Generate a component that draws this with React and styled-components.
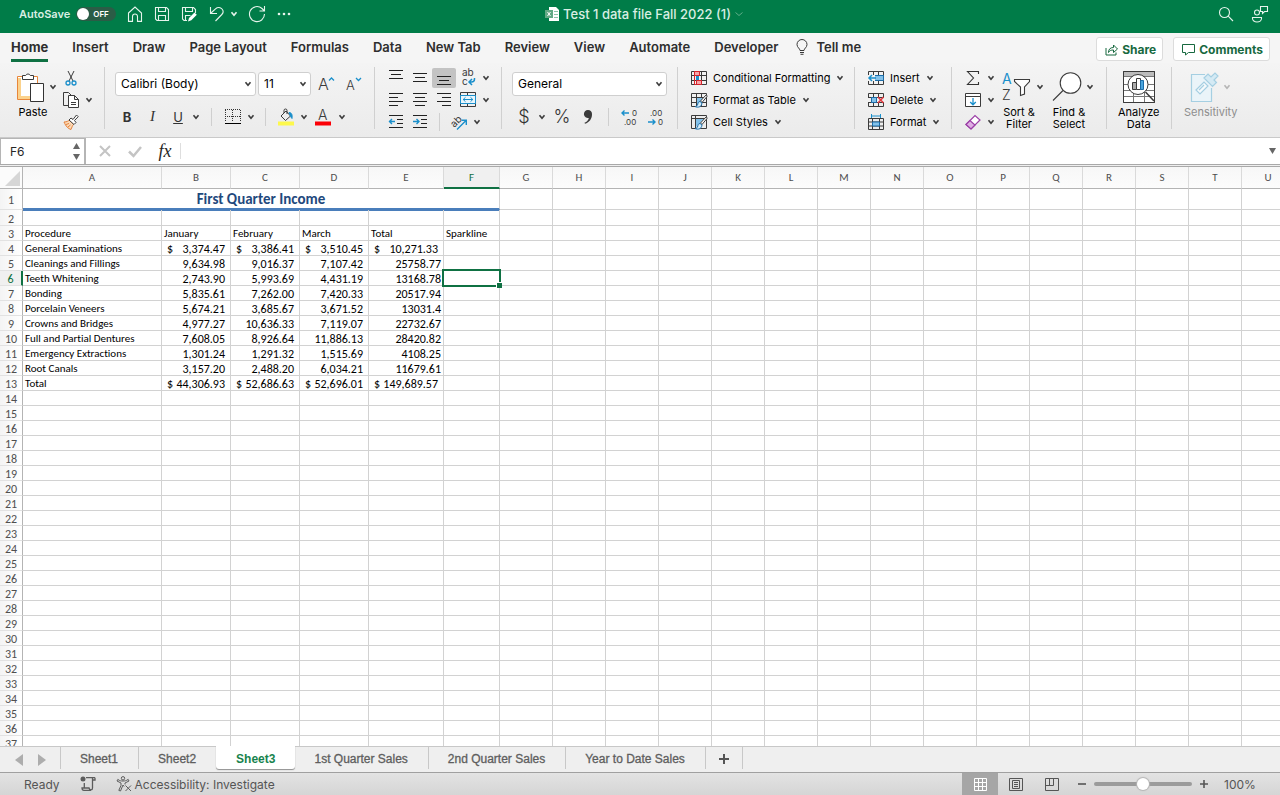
import { useState } from "react";
import styled, { createGlobalStyle, css } from "styled-components";

const GlobalStyle = createGlobalStyle`
  *, *::before, *::after {
    box-sizing: border-box;
  }

  body {
    margin: 0;
    font-family: Inter, "Liberation Sans", sans-serif;
    color: #262626;
    overflow: hidden;
  }

  button, input, select {
    font: inherit;
    color: inherit;
    margin: 0;
  }

  svg {
    display: block;
    flex: none;
    overflow: visible;
  }
`;

const Page = styled.div`
  height: 100vh;
  display: flex;
  flex-direction: column;
  background: #efefef;
`;

/* ---------- title bar ---------- */

const TitleBar = styled.header`
  height: 33px;
  flex: none;
  display: grid;
  grid-template-columns: 1fr auto 1fr;
  align-items: center;
  padding: 0 11px 5px 19px;
  background: #007c48;
  color: #d9eee3;
`;

const TitleSide = styled.div`
  display: flex;
  align-items: center;
  justify-content: ${({ $end }) => ($end ? "flex-end" : "flex-start")};
  gap: ${({ $end }) => ($end ? "17px" : "11px")};
`;

const AutoSave = styled.label`
  display: flex;
  align-items: center;
  gap: 6px;
  font-size: 11px;
  font-weight: 600;

  > input {
    position: absolute;
    opacity: 0;
  }

  > span {
    width: 40px;
    height: 14px;
    display: flex;
    align-items: center;
    gap: 4px;
    padding-left: 1px;
    border-radius: 7px;
    background: #2b5c46;
    color: #fff;
    font-size: 8px;
    font-weight: 600;
  }

  > span::before {
    content: "";
    width: 12px;
    height: 12px;
    border-radius: 50%;
    background: #fff;
  }
`;

const DocTitle = styled.h1`
  display: flex;
  align-items: center;
  gap: 4px;
  margin: 0;
  font-size: 13px;
  line-height: 16px;
  font-weight: 500;
`;

const BarButton = styled.button`
  display: flex;
  align-items: center;
  justify-content: center;
  min-width: ${({ $w }) => $w || 16}px;
  height: 20px;
  padding: 0;
  border: 0;
  background: none;
`;

const UndoGroup = styled.div`
  display: flex;
  align-items: center;
  gap: 6px;
`;

/* ---------- ribbon tabs ---------- */

const TabRow = styled.div`
  height: 30px;
  flex: none;
  display: flex;
  align-items: center;
  justify-content: space-between;
  padding: 0 10px 0 11px;
  background: #f5f5f5;
`;

const TabNav = styled.nav`
  display: flex;
  align-items: center;
  gap: 18px;
`;

const TabList = styled.div`
  display: flex;
  gap: 24px;
`;

const RibbonTab = styled.a`
  display: flex;
  align-items: center;
  gap: 8px;
  height: 28px;
  padding-top: 1px;
  border-bottom: 3px solid ${({ $active }) => ($active ? "#0f7143" : "transparent")};
  font-size: 13px;
  font-weight: ${({ $active }) => ($active ? 700 : 600)};
  color: #2e2e2e;
  text-decoration: none;
  white-space: nowrap;
`;

const TabActions = styled.div`
  display: flex;
  gap: 10px;
  padding-top: 2px;
`;

const ActionButton = styled.button`
  height: 24px;
  display: flex;
  align-items: center;
  gap: 4px;
  padding: 0 6px 0 8px;
  border: 1px solid #dcdcdc;
  border-radius: 3px;
  background: #fff;
  color: #17693f;
  font-size: 12px;
  font-weight: 700;
`;

/* ---------- ribbon ---------- */

const Ribbon = styled.div`
  height: 75px;
  flex: none;
  display: flex;
  padding-top: 4px;
  background: linear-gradient(#f4f4f4, #ebebeb);
  border-bottom: 1px solid #c9c9c9;
`;

const Group = styled.section`
  flex: none;
  width: ${({ $w }) => ($w ? $w + "px" : "auto")};
  height: 62px;
  display: flex;
  align-items: flex-start;
  gap: ${({ $gap }) => $gap || 0}px;
  padding-left: ${({ $pad }) => $pad}px;
  border-right: ${({ $last }) => ($last ? "0" : "1px solid #d0d0d0")};
`;

const Stack = styled.div`
  display: flex;
  flex-direction: column;
`;

const Pair = styled.div`
  display: flex;
  gap: 16px;
`;

const Line = styled.div`
  height: ${({ $tall }) => ($tall ? 33 : 22)}px;
  display: flex;
  align-items: center;
  gap: ${({ $gap }) => $gap || 0}px;
`;

const Tool = styled.button`
  width: ${({ $w }) => $w || 24}px;
  height: 20px;
  display: flex;
  align-items: center;
  justify-content: center;
  padding: 0;
  border: 0;
  border-radius: 2px;
  background: ${({ $pressed }) => ($pressed ? "#c3c3c3" : "none")};
  color: #333;
  font-size: ${({ $size }) => $size || 13}px;
  font-weight: ${({ $size }) => ($size ? 300 : 400)};
`;

const LabelTool = styled.button`
  height: 22px;
  display: flex;
  align-items: center;
  gap: 6px;
  padding: 0;
  border: 0;
  background: none;
  color: #000;
  font-size: 11px;
  font-weight: 400;
  white-space: nowrap;
`;

const BigTool = styled.button`
  display: flex;
  flex-direction: column;
  align-items: center;
  padding: 0;
  border: 0;
  background: none;
  color: ${({ disabled }) => (disabled ? "#8d8d8d" : "#000")};
  font-size: 11px;
  line-height: 12px;
  font-weight: 400;

  > span {
    height: 39px;
    display: flex;
    align-items: center;
    gap: 4px;
    margin-right: ${({ $menu }) => ($menu ? "-8px" : "0")};
  }
`;

const Rule = styled.i`
  width: 1px;
  height: 18px;
  margin: 0 ${({ $m }) => $m}px;
  background: #cfcfcf;
`;

const Picker = styled.label`
  width: ${({ $w }) => $w}px;
  height: 24px;
  display: flex;
  align-items: center;
  padding-right: 3px;
  border: 1px solid #cfcfcf;
  border-radius: 3px;
  background: #fff;

  > select {
    flex: 1;
    min-width: 0;
    padding: 0 0 0 5px;
    border: 0;
    outline: 0;
    background: none;
    appearance: none;
    font-size: 12px;
    color: #000;
  }
`;

/* ---------- formula bar ---------- */

const FormulaBar = styled.div`
  height: 27px;
  flex: none;
  display: flex;
  align-items: stretch;
  background: #fff;
  border-bottom: 1px solid #a9a9a9;
`;

const NameBox = styled.div`
  width: 86px;
  display: flex;
  align-items: center;
  justify-content: space-between;
  padding: 0 4px 0 9px;
  border: 1px solid #b5b5b5;
  border-width: 1px 2px 0 1px;

  > input {
    width: 50px;
    padding: 0;
    border: 0;
    outline: 0;
    font-size: 12px;
  }
`;

const FormulaTools = styled.div`
  display: flex;
  align-items: center;
  gap: 14px;
  padding: 0 7px 0 11px;
`;

const FormulaInput = styled.input`
  flex: 1;
  min-width: 0;
  margin: 5px 0;
  padding: 0 8px;
  border: 0;
  border-left: 1px solid #dedede;
  outline: 0;
  font-size: 12px;
`;

/* ---------- grid ---------- */

const GridArea = styled.main`
  flex: 1;
  min-height: 0;
  overflow: hidden;
  margin-top: 1px;
  border-top: 1px solid #a9a9a9;
  background: #fff;
`;

const Sheet = styled.table`
  width: max-content;
  table-layout: fixed;
  border-collapse: separate;
  border-spacing: 0;
  font-family: Carlito, Lato, "Noto Sans", sans-serif;
  font-size: 11px;
  line-height: 12px;
  font-variant-ligatures: none;
  color: #000;
`;

const Col = styled.col`
  width: ${({ $w }) => $w}px;
`;

const ColHead = styled.th`
  height: 22px;
  padding: 0;
  border-right: 1px solid #dadada;
  border-bottom: 1px solid #b4b4b4;
  background: linear-gradient(#f7f7f7, #fcfcfc);
  font-weight: 400;
  color: #4f4f4f;

  ${({ $selected }) => $selected && css`
    padding-top: 1px;
    background: #f0f0f0;
    border-bottom: 2px solid #0f7143;
    color: #0f7143;
  `}
`;

const Corner = styled.th`
  padding: 0 2px 2px 5px;
  border-right: 1px solid #b4b4b4;
  border-bottom: 1px solid #b4b4b4;
  background: #fbfbfb;
  vertical-align: bottom;
`;

const RowHead = styled.th`
  height: ${({ $h }) => $h}px;
  padding: 2px 0 0;
  border-right: 1px solid #b4b4b4;
  border-bottom: 1px solid #e2e2e2;
  background: linear-gradient(to right, #f4f4f4, #fff);
  font-size: 12px;
  font-weight: 400;
  color: #4f4f4f;

  ${({ $selected }) => $selected && css`
    background: #f0f0f0;
    border-right: 2px solid #0f7143;
    color: #0f7143;
  `}
`;

const Cell = styled.td`
  position: ${({ $selected }) => ($selected ? "relative" : "static")};
  padding: 2px ${({ $pad }) => $pad || 2}px 0;
  border-right: 1px solid #d2d2d2;
  border-bottom: 1px solid #d2d2d2;
  font-size: ${({ $number }) => ($number ? 12 : 11)}px;
  text-align: ${({ $number }) => ($number ? "right" : "left")};
  white-space: nowrap;
`;

const TitleCell = styled.td`
  padding: 1px 0 0;
  border-right: 1px solid #d2d2d2;
  border-bottom: 2px solid #4a7ebb;
  box-shadow: 0 1px 0 #4a7ebb;
  font-size: 15px;
  line-height: 18px;
  font-weight: 700;
  color: #1f497d;
  text-align: center;
`;

const Money = styled.span`
  display: flex;
  justify-content: space-between;
`;

const Cursor = styled.div`
  position: absolute;
  inset: -2px -2px -2px -2px;
  border: 2px solid #0f7143;

  &::after {
    content: "";
    position: absolute;
    right: -3px;
    bottom: -3px;
    width: 6px;
    height: 6px;
    border: solid #fff;
    border-width: 1px 0 0 1px;
    background: #0f7143;
  }
`;

/* ---------- sheet tabs and status bar ---------- */

const SheetBar = styled.nav`
  height: 27px;
  flex: none;
  display: flex;
  align-items: flex-start;
  padding-left: 11px;
  border-top: 1px solid #c8c8c8;
  border-bottom: 1px solid #a0a0a0;
  background: #efefef;
  font-family: "Liberation Sans", Arial, sans-serif;
`;

const Arrows = styled.div`
  display: flex;
  gap: 7px;
  padding: 3px 10px 0 0;
`;

const SheetTab = styled.button`
  height: 22px;
  padding: 2px ${({ $narrow }) => ($narrow ? 13 : 20)}px 0 ${({ $narrow }) => ($narrow ? 13 : 19)}px;
  border: 0;
  border-left: 1px solid #c8c8c8;
  background: none;
  color: #5e5e5e;
  font-size: 12px;
  font-weight: 400;
  -webkit-text-stroke: 0.3px currentColor;

  &:last-child {
    border-right: 1px solid #c8c8c8;
  }

  ${({ $active }) => $active && css`
    height: 23px;
    margin-top: -1px;
    padding: 3px 20px 0;
    border: 0;
    border-radius: 0 0 3px 3px;
    background: #fff;
    box-shadow: 0 1px 1px #8f8f8f;
    color: #17834d;
    font-weight: 700;
    -webkit-text-stroke: 0;

    & + button {
      border-left: 0;
    }
  `}
`;

const StatusBar = styled.footer`
  height: 22px;
  flex: none;
  display: flex;
  align-items: center;
  justify-content: space-between;
  padding: 0 24px;
  background: linear-gradient(#e3e3e3, #d5d5d5);
  color: #555;
  font-size: 12px;
`;

const StatusSide = styled.div`
  height: 22px;
  display: flex;
  align-items: center;
`;

const StatusItem = styled.button`
  height: 22px;
  display: flex;
  align-items: center;
  gap: 3px;
  padding: 0;
  margin-left: 20px;
  border: 0;
  background: none;
`;

const ViewButton = styled.button`
  width: 36px;
  height: 22px;
  display: flex;
  align-items: center;
  justify-content: center;
  padding: 0;
  border: 0;
  background: ${({ $active }) => ($active ? "#a6a6a6" : "none")};
`;

const ZoomButton = styled.button`
  width: 24px;
  padding: 0;
  border: 0;
  background: none;
  display: flex;
  justify-content: center;
`;

const ZoomSlider = styled.input`
  width: 98px;
  height: 14px;
  background: none;
  appearance: none;

  &::-webkit-slider-runnable-track {
    height: 4px;
    border-radius: 2px;
    background: #9b9b9b;
  }

  &::-webkit-slider-thumb {
    width: 12px;
    height: 12px;
    margin-top: -4px;
    border-radius: 50%;
    background: #fff;
    box-shadow: 0 0 1px 1px #b5b5b5;
    appearance: none;
  }
`;

const ZoomValue = styled.output`
  width: 40px;
  padding-left: 8px;
  white-space: nowrap;
`;

/* ---------- icons ---------- */

const BLUE = "#1a8fcb";
const INK = "#3b3b3b";

const Icon = ({ w = 16, h = 16, color = INK, sw = 1, children }) => (
  <svg width={w} height={h} viewBox={`0 0 ${w} ${h}`} fill="none" stroke={color} strokeWidth={sw} aria-hidden="true">
    {children}
  </svg>
);

const Chevron = ({ color = INK, thin }) => (
  <Icon w={8} h={6} color={color} sw={thin ? 1 : 1.6}>
    <path d={thin ? "M.5 1.5L4 4.5 7.5 1.5" : "M1.5 1.2L4 4.2 6.5 1.2"} />
  </Icon>
);

const HomeIcon = () => (
  <Icon color="#e6f4ec" sw={1.1}>
    <path d="M1.5 7L8 1l6.5 6v8.400h-4V10.500a2.500 2.500 0 0 0-5 0v4.900h-4z" />
  </Icon>
);

const SaveIcon = ({ pencil }) => (
  <Icon color="#e6f4ec" sw={1.1}>
    <path d={pencil ? "M6 14.5H3L1.5 13V1.5H12.5L14.5 3.5V7" : "M1.5 1.5H12.5L14.5 3.5V14.5H3L1.5 13z"} />
    <path d="M4.5 1.5v4h7v-4" />
    <path d={pencil ? "M4.5 14V9.500h5" : "M4.5 14.500V9.500h7v5"} />
    {pencil && <path d="M7 15.5l1-3.5 5.500-5.500 2.300 2.300-5.500 5.500z" fill="#fff" stroke="none" />}
  </Icon>
);

const UndoIcon = () => (
  <Icon color="#e6f4ec" sw={1.1}>
    <path d="M2.500 1v6.500H9M3 7L7.500 2.800c2.200-2 5-1.600 6.500.2s1.300 4-.2 5.500L7.500 15" />
  </Icon>
);

const RedoIcon = () => (
  <Icon color="#e6f4ec" sw={1.1}>
    <path d="M15.500 8A7.500 7.500 0 1 1 13 2.500L15.500 5M15.500 0v5h-5" />
  </Icon>
);

const DotsIcon = () => (
  <Icon color="none">
    <g fill="#e6f4ec">
      <circle cx="3" cy="8" r="1.300" />
      <circle cx="8" cy="8" r="1.300" />
      <circle cx="13" cy="8" r="1.300" />
    </g>
  </Icon>
);

const DocIcon = () => (
  <Icon w={14} color="none">
    <path d="M4 1h7l3 3v11H4z" fill="#fff" />
    <path d="M9 5.500h4M9 8.500h4M9 11.500h4" stroke="#8cc5a9" />
    <path d="M0 4h8v8H0z" fill="#62a985" />
    <path d="M2.500 6l3 4M5.500 6l-3 4" stroke="#fff" />
  </Icon>
);

const SearchIcon = () => (
  <Icon color="#e6f4ec" sw={1.1}>
    <circle cx="6.500" cy="6.500" r="5" />
    <path d="M10.200 10.200L15 15" />
  </Icon>
);

const PeopleIcon = () => (
  <Icon w={18} h={18} color="#e6f4ec" sw={1.1}>
    <circle cx="6" cy="7.500" r="2.500" />
    <path d="M1.500 12.500h9v1c0 2-2 3.500-4.500 3.500s-4.500-1.500-4.500-3.500zM9.500 1.500h7v5h-3l-2 2v-2h-2z" />
  </Icon>
);

const BulbIcon = () => (
  <Icon w={12} h={16}>
    <path d="M4 11.500c0-2-3-3-3-6a5 5 0 0 1 10 0c0 3-3 4-3 6zM4 13.500h4M4.500 15.300h3" />
  </Icon>
);

const ShareIcon = () => (
  <Icon w={13} h={13} color="#17693f">
    <path d="M1 5v7h10V9.500M3.500 9.500c0-3 1.500-5 5-5V2l4 4-4 3.500V7c-2.500 0-4 .5-5 2.500z" />
  </Icon>
);

const CommentIcon = () => (
  <Icon w={13} h={13} color="#17693f">
    <path d="M.5 1.500h12v8H6.500L3.500 12V9.500h-3z" />
  </Icon>
);

const PasteIcon = () => (
  <Icon w={28} h={32}>
    <path d="M.5 5.500h20v23H.5z" fill="#fff" stroke="#e8863a" />
    <path d="M2.500 7v19.500H14" stroke="#fbd28c" strokeWidth="3" />
    <path d="M5.500 8.500v-4h3.200a2.500 2.500 0 0 1 4.600 0h3.200v4z" fill="#fff" />
    <path d="M13.500 12.500h13v18h-13z" fill="#fff" stroke="#333" />
  </Icon>
);

const CutIcon = () => (
  <Icon>
    <path d="M5 1l5 10M11 1L6 11" />
    <circle cx="5" cy="13" r="2" stroke={BLUE} strokeWidth="1.300" />
    <circle cx="11" cy="13" r="2" stroke={BLUE} strokeWidth="1.300" />
  </Icon>
);

const CopyIcon = () => (
  <Icon>
    <path d="M5.500 13.500H.5V.5h5l3 3" />
    <path d="M5.500 3.500h6l4 4v8h-10zM11.500 3.500v4h4M8 10.500h5M8 12.500h5" fill="#fff" />
  </Icon>
);

const BrushIcon = () => (
  <Icon>
    <path d="M1 8c3 0 4-1 5.500-2l4 4.500C9 12 9 13.500 8 15.500c-3-1-5-3-7-7.500z" fill="#fcd9b6" stroke="#e5813a" />
    <path d="M3 10.500l3-1M5 13l2.500-2" stroke="#e5813a" />
    <path d="M6 6l2-2 2 1.500L13.500 1l1.700 1.700L11.500 6.500 13 8.500l-2 2z" fill="#fff" />
  </Icon>
);

const FontSizeIcon = ({ up }) => (
  <Icon w={18} h={18} color="none">
    <text x="0" y="15" fontSize={up ? 16 : 13} fontWeight="300" fill={INK} fontFamily="Inter">A</text>
    <path d={up ? "M11 5.500l2.500-2.500L16 5.500" : "M10 3l2.500 2.500L15 3"} stroke={BLUE} strokeWidth="1.300" />
  </Icon>
);

const BordersIcon = () => (
  <Icon color="#333">
    <path d="M.5 1v12M15.500 1v12M7.500 1v12M0 .5h16M0 7.500h16" strokeDasharray="1 1" />
    <path d="M0 14.500h16" stroke="#000" />
  </Icon>
);

const FillIcon = () => (
  <Icon h={18}>
    <path d="M3 8l5-5 4.500 5L7.500 12.500zM6 5V2.500a1.500 1.500 0 0 1 3 0V6" />
    <path d="M11 4.500c3 0 3.500 3 3 6-1-1-2-3-3-6z" fill={BLUE} stroke={BLUE} />
    <path d="M0 15.500h16" stroke="#fdf84c" strokeWidth="4" />
  </Icon>
);

const FontColorIcon = () => (
  <Icon h={18} color="none">
    <text x="3" y="12" fontSize="14" fontWeight="300" fill={INK} fontFamily="Inter">A</text>
    <path d="M0 15.500h16" stroke="#fb0007" strokeWidth="4" />
  </Icon>
);

const LINES = {
  top: "M1 .5h14M3 4.500h10M1 8.500h14",
  middle: "M1 3.500h14M3 7.500h10M1 11.500h14",
  bottom: "M1 6.500h14M3 10.500h10M1 14.500h14",
  left: "M1 1.500h14M1 5.500h9M1 9.500h14M1 13.500h9",
  center: "M1 1.500h14M3 5.500h10M1 9.500h14M3 13.500h10",
  right: "M1 1.500h14M6 5.500h9M1 9.500h14M6 13.500h9",
};

const LinesIcon = ({ kind }) => (
  <Icon color="#222">
    <path d={LINES[kind]} />
  </Icon>
);

const IndentIcon = ({ out }) => (
  <Icon color="#222">
    <path d="M1 1.500h14M9 5.500h6M9 9.500h6M1 13.500h14" />
    <path d={out ? "M7 7.500H1M4 5L1.500 7.500 4 10" : "M1 7.500h6M4.500 5L7 7.500 4.500 10"} stroke={BLUE} strokeWidth="1.400" />
  </Icon>
);

const WrapIcon = () => (
  <Icon w={16} h={18} color="none">
    <text x="2" y="7" fontSize="10" fill={INK} fontFamily="Inter">ab</text>
    <text x="2" y="16" fontSize="10" fill={INK} fontFamily="Inter">c</text>
    <path d="M14.500 9v1c0 2-1 3-3 3H9M12 10l-3 3 3 3" stroke={BLUE} strokeWidth="1.500" />
  </Icon>
);

const MergeIcon = () => (
  <Icon>
    <path d="M.5.5h15v14H.5zM7.500.5v3M7.500 11.500v3" />
    <path d="M.5 3.500h15v8H.5z" fill="#eaf6fc" stroke={BLUE} />
    <path d="M3 7.500h10M5.500 5.300L3.200 7.500l2.300 2.200M10.500 5.300l2.300 2.200-2.300 2.200" stroke={BLUE} />
  </Icon>
);

const OrientIcon = () => (
  <Icon color="none">
    <text x="0" y="12" fontSize="10" fill={INK} fontFamily="Inter" transform="rotate(-45 4 9)">ab</text>
    <path d="M6 15.500l9-9M10.500 6.200h4.800V11" stroke={BLUE} strokeWidth="1.400" />
  </Icon>
);

const DecimalIcon = ({ more }) => (
  <Icon h={18} color="none">
    <text x={more ? 11 : 3} y="8" fontSize="8" fill={INK} fontFamily="Inter">{more ? "0" : ".00"}</text>
    <text x={more ? 3 : 11} y="17" fontSize="8" fill={INK} fontFamily="Inter">{more ? ".00" : "0"}</text>
    <path
      d={more ? "M8 5H1M3.500 2.500L1 5l2.500 2.500" : "M1 14h7M5.500 11.500L8 14l-2.500 2.500"}
      stroke={BLUE}
      strokeWidth="1.400"
    />
  </Icon>
);

const Lattice = () => <path d="M.5 1.500h15v13H.5zM.5 5.500h15M.5 10.500h15M5.500 1.500v13M10.500 1.500v13" />;

const CondIcon = () => (
  <Icon>
    <Lattice />
    <path d="M3.500 1.500h5v4h-5zM5.500 10.500h5v4h-5z" fill="#f7a5a8" stroke="#d8232a" />
    <path d="M3.500 5.500v9h2" stroke="#d8232a" />
    <path d="M5 6h3v4H5z" fill={BLUE} stroke="none" />
  </Icon>
);

const PaintedIcon = ({ full }) => (
  <Icon>
    {full ? <path d="M.5 1.500h15v13H.5zM.5 4.500h15M4.500 1.500v13" /> : <Lattice />}
    <path d={full ? "M5 5h8l-8 8z" : "M6 6h9l-7 8H6z"} fill="#83c1e9" stroke="none" />
    <path d="M15.500 2.500L9.500 9l1.500 1.500 5-6z" fill="#fff" />
    <path d="M9 9.500c-2 0-2 2-2.500 3.500-.5 1-1.500 1.500-2.500 1.500 3 1.500 6.500.5 7-3.500z" fill="#d4ecf9" stroke="#1b6ca8" />
  </Icon>
);

const InsertIcon = () => (
  <Icon>
    <Lattice />
    <path d="M6 5.500h9.500v5H6z" fill="#83c1e9" stroke="#1b6ca8" />
    <path d="M0 5h7v6H0z" fill="#f1f1f1" stroke="none" />
    <path d="M8 8H1M4 5L1 8l3 3" stroke={BLUE} strokeWidth="1.500" />
  </Icon>
);

const DeleteIcon = () => (
  <Icon>
    <Lattice />
    <path d="M0 6h16v4H0z" fill="#f1f1f1" stroke="none" />
    <path d="M0 5.500h4M0 10.500h4" />
    <path d="M3.500 5.500h5v5h-5z" fill="#83c1e9" stroke="#1b6ca8" />
    <path d="M10 5l5.500 6M15.500 5L10 11" stroke="#e2383f" strokeWidth="1.500" />
  </Icon>
);

const FormatIcon = () => (
  <Icon>
    <path d="M.5 4.500h15v11H.5zM.5 8h15M.5 12h15M4.500 4.500v11M11.500 4.500v11" />
    <path d="M4.500 8h7v4h-7z" fill="#83c1e9" stroke="#1b6ca8" />
    <path d="M3.500 0v4M12.500 0v4M3.500 2h9" stroke={BLUE} />
  </Icon>
);

const SumIcon = () => (
  <Icon color="#333" sw={1.1}>
    <path d="M13.500 4V1.500h-11L8.500 8l-6 6.500h11V12" />
  </Icon>
);

const FillDownIcon = () => (
  <Icon>
    <path d="M.5 1.500h15v13H.5zM.5 4.500h15" fill="#fff" />
    <path d="M8 6v7M5.200 10L8 12.800 10.800 10" stroke={BLUE} strokeWidth="1.300" />
  </Icon>
);

const EraserIcon = () => (
  <Icon color="#9b3fa6" sw={1.2}>
    <path d="M1 10.500l9-9 5 4.500-9 9z" fill="#fff" />
    <path d="M1 10.500l4-4 5 4.500-4 4z" fill="#dfaee4" />
  </Icon>
);

const SortIcon = () => (
  <Icon w={30} h={32} color="none">
    <text x="0" y="13" fontSize="14" fill={BLUE} fontFamily="Inter">A</text>
    <text x="0" y="29" fontSize="14" fontWeight="300" fill={INK} fontFamily="Inter">Z</text>
    <path d="M12.500 8.500h15v2l-5 5.500v7l-4 1.500V16l-6-5.500z" fill="#fff" stroke={INK} strokeWidth="1.100" />
  </Icon>
);

const FindIcon = () => (
  <Icon w={30} h={32} sw={1.1}>
    <circle cx="18.500" cy="12" r="10.300" fill="#fff" />
    <path d="M11 19.500L1 29.500" />
  </Icon>
);

const AnalyzeIcon = () => (
  <Icon w={32} h={32}>
    <path d="M.5.5h31v31H.5z" fill="#fff" />
    <path d="M1 1h30v4H1z" fill="#bcbcbc" stroke="none" />
    <path d="M.5 5.500h31M.5 13.500h31M.5 19.500h31M.5 25.500h31M10.500 5.500v26M21.500 5.500v26" stroke="#777" />
    <path d="M.5.5h31v31H.5z" />
    <circle cx="15" cy="13.500" r="10" fill="#fff" />
    <path d="M9.500 11.500h4v7h-4z" fill="#aaa" />
    <path d="M13.500 7.500h4v11h-4z" fill="#fff" />
    <path d="M17.500 9.500h3v9h-3z" fill="#4aa5de" stroke="#1b6ca8" />
    <path d="M22.500 21l8.500 9" strokeWidth="1.500" />
  </Icon>
);

const SensitivityIcon = () => (
  <Icon w={28} h={32} color="#a5cfe2" sw={1.200}>
    <path d="M20.500 17v13.500h-20V3.500H14" fill="#eaf4f9" />
    <path d="M5 19l8-8 4 4-8 8zM8 19l5-5" fill="#f6fafc" />
    <path d="M13 7l4-4 3 3 4-4 3 3-4 4 2.500 2.500-4 4z" fill="#d5eaf4" />
  </Icon>
);

const CrossIcon = () => (
  <Icon w={16} h={14} color="#c4c4c4" sw={2}>
    <path d="M3 2l10 10M13 2L3 12" />
  </Icon>
);

const TickIcon = () => (
  <Icon w={16} h={14} color="#c4c4c4" sw={2.500}>
    <path d="M2 7.500L6.500 12 14 3" />
  </Icon>
);

const Triangle = ({ dir, size = 8, color = "#666" }) => {
  const paths = { up: "M0 8L4 0l4 8z", down: "M0 0l4 8 4-8z", left: "M8 0v8L0 4z", right: "M0 0l8 4-8 4z" };
  return (
    <svg width={size} height={dir === "up" || dir === "down" ? 6 : 12} viewBox="0 0 8 8" preserveAspectRatio="none" fill={color} aria-hidden="true">
      <path d={paths[dir]} />
    </svg>
  );
};

const MacroIcon = () => (
  <Icon color="#5c5c5c" sw={1.300}>
    <circle cx="3" cy="3" r="2.500" fill="#5c5c5c" stroke="none" />
    <path d="M6 1.700h8.500c1 .5.500 1.800.5 2.300h-2.500V12c0 2.500-3 2.500-3.500 0H2c0 1.500.8 2.300 2 2.300h7M4.300 7v5M12.500 4V2" />
  </Icon>
);

const AccessIcon = () => (
  <Icon color="#5c5c5c">
    <circle cx="7" cy="2.300" r="1.700" />
    <path d="M8 10.500L7 9l-2.500 6-1.700-.6L5 9.500V7L1 5l.8-1.600C4 5 5 5 7 5s3-.1 5.200-1.600L13 5 9 7v1.500M9.500 9.500l5.500 5.500M15 9.500L9.500 15" />
  </Icon>
);

const NormalViewIcon = () => (
  <Icon w={13} h={13} color="#fff">
    <path d="M.5.5h12v12H.5zM4.500.5v12M8.500.5v12M.5 4.500h12M.5 8.500h12" />
  </Icon>
);

const PageViewIcon = () => (
  <Icon w={14} h={13} color="#555">
    <path d="M.5.5h13v12H.5zM3.500 2.500h7v8h-7zM5 4.500h4M5 6.500h4M5 8.500h4" />
  </Icon>
);

const BreakViewIcon = () => (
  <Icon w={14} h={13} color="#555">
    <path d="M.5.5h13v12H.5zM.5 7.500h8v-7M4.500.5v7" />
  </Icon>
);

const PlusIcon = ({ minus, size = 10 }) => (
  <svg width={size} height={size} viewBox="0 0 10 10" stroke="#555" strokeWidth="2" aria-hidden="true">
    <path d={minus ? "M0 5h10" : "M0 5h10M5 0v10"} />
  </svg>
);

/* ---------- data ---------- */

const tabs = ["Home", "Insert", "Draw", "Page Layout", "Formulas", "Data", "New Tab", "Review", "View", "Automate", "Developer"];

const columns = "ABCDEFGHIJKLMNOPQRSTUVWXYZ".split("");
const columnWidths = { A: 139, B: 69, C: 69, D: 69, E: 75, F: 56 };
const rowHeights = { 1: 21, 2: 16 };
const ROW_COUNT = 70;

const cells = {
  3: ["Procedure", "January", "February", "March", "Total", "Sparkline"],
  4: ["General Examinations", "$3,374.47", "$3,386.41", "$3,510.45", "$10,271.33"],
  5: ["Cleanings and Fillings", "9,634.98", "9,016.37", "7,107.42", "25758.77"],
  6: ["Teeth Whitening", "2,743.90", "5,993.69", "4,431.19", "13168.78"],
  7: ["Bonding", "5,835.61", "7,262.00", "7,420.33", "20517.94"],
  8: ["Porcelain Veneers", "5,674.21", "3,685.67", "3,671.52", "13031.4"],
  9: ["Crowns and Bridges", "4,977.27", "10,636.33", "7,119.07", "22732.67"],
  10: ["Full and Partial Dentures", "7,608.05", "8,926.64", "11,886.13", "28420.82"],
  11: ["Emergency Extractions", "1,301.24", "1,291.32", "1,515.69", "4108.25"],
  12: ["Root Canals", "3,157.20", "2,488.20", "6,034.21", "11679.61"],
  13: ["Total", "$44,306.93", "$52,686.63", "$52,696.01", "$149,689.57"],
};

const sheets = ["Sheet1", "Sheet2", "Sheet3", "1st Quarter Sales", "2nd Quarter Sales", "Year to Date Sales"];

/* ---------- components ---------- */

const Header = () => (
  <TitleBar>
    <TitleSide>
      <AutoSave>
        AutoSave
        <input type="checkbox" />
        <span>OFF</span>
      </AutoSave>
      <BarButton aria-label="Home"><HomeIcon /></BarButton>
      <BarButton aria-label="Save"><SaveIcon /></BarButton>
      <BarButton aria-label="Save as"><SaveIcon pencil /></BarButton>
      <UndoGroup>
        <BarButton aria-label="Undo"><UndoIcon /></BarButton>
        <BarButton aria-label="Undo list" $w={8}><Chevron color="#e6f4ec" /></BarButton>
      </UndoGroup>
      <BarButton aria-label="Redo"><RedoIcon /></BarButton>
      <BarButton aria-label="More"><DotsIcon /></BarButton>
    </TitleSide>
    <DocTitle>
      <DocIcon />
      Test 1 data file Fall 2022 (1)
      <Chevron color="#5fae88" thin />
    </DocTitle>
    <TitleSide $end>
      <BarButton aria-label="Search"><SearchIcon /></BarButton>
      <BarButton aria-label="People"><PeopleIcon /></BarButton>
    </TitleSide>
  </TitleBar>
);

const Tabs = () => (
  <TabRow>
    <TabNav>
      <TabList>
        {tabs.map((tab) => (
          <RibbonTab key={tab} href="#" $active={tab === "Home"}>{tab}</RibbonTab>
        ))}
      </TabList>
      <RibbonTab href="#"><BulbIcon />Tell me</RibbonTab>
    </TabNav>
    <TabActions>
      <ActionButton><ShareIcon />Share</ActionButton>
      <ActionButton><CommentIcon />Comments</ActionButton>
    </TabActions>
  </TabRow>
);

const Menu = ({ label, w = 12 }) => (
  <Tool $w={w} aria-label={label}><Chevron /></Tool>
);

const Select = ({ label, value, w }) => (
  <Picker $w={w}>
    <select aria-label={label} defaultValue={value}>
      <option>{value}</option>
    </select>
    <Chevron />
  </Picker>
);

const Italic = styled.i`
  font-family: "Liberation Serif", serif;
  font-size: 15px;
`;

const RibbonBar = () => (
  <Ribbon>
    <Group $w={105} $pad={17} $gap={10}>
      <BigTool $menu><span><PasteIcon /><Chevron /></span>Paste</BigTool>
      <Stack>
        <Line><Tool aria-label="Cut"><CutIcon /></Tool></Line>
        <Line><Tool aria-label="Copy"><CopyIcon /></Tool><Menu label="Copy options" /></Line>
        <Line><Tool aria-label="Format painter"><BrushIcon /></Tool></Line>
      </Stack>
    </Group>
    <Group $w={270} $pad={10}>
      <Stack>
        <Line $tall $gap={2}>
          <Select label="Font" value="Calibri (Body)" w={141} />
          <Select label="Font size" value="11" w={53} />
          <Tool $w={28} aria-label="Increase font size"><FontSizeIcon up /></Tool>
          <Tool aria-label="Decrease font size"><FontSizeIcon /></Tool>
        </Line>
        <Line $tall>
          <Tool aria-label="Bold"><b>B</b></Tool>
          <Tool $w={27} aria-label="Italic"><Italic>I</Italic></Tool>
          <Tool aria-label="Underline"><u>U</u></Tool>
          <Menu label="Underline options" />
          <Rule $m={9} />
          <Tool aria-label="Borders"><BordersIcon /></Tool>
          <Menu label="Border options" />
          <Rule $m={8} />
          <Tool aria-label="Fill color"><FillIcon /></Tool>
          <Menu label="Fill options" />
          <Tool $w={26} aria-label="Font color"><FontColorIcon /></Tool>
          <Menu label="Font color options" />
        </Line>
      </Stack>
    </Group>
    <Group $w={127} $pad={9}>
      <Stack>
        <Line>
          <Tool aria-label="Top align"><LinesIcon kind="top" /></Tool>
          <Tool aria-label="Middle align"><LinesIcon kind="middle" /></Tool>
          <Tool $pressed aria-label="Bottom align"><LinesIcon kind="bottom" /></Tool>
          <Tool aria-label="Wrap text"><WrapIcon /></Tool>
          <Menu label="Wrap options" />
        </Line>
        <Line>
          <Tool aria-label="Align left"><LinesIcon kind="left" /></Tool>
          <Tool aria-label="Center"><LinesIcon kind="center" /></Tool>
          <Tool aria-label="Align right"><LinesIcon kind="right" /></Tool>
          <Tool aria-label="Merge"><MergeIcon /></Tool>
          <Menu label="Merge options" />
        </Line>
        <Line>
          <Tool aria-label="Decrease indent"><IndentIcon out /></Tool>
          <Tool aria-label="Increase indent"><IndentIcon /></Tool>
          <Rule $m={7} />
          <Tool aria-label="Orientation"><OrientIcon /></Tool>
          <Menu label="Orientation options" />
        </Line>
      </Stack>
    </Group>
    <Group $w={176} $pad={10}>
      <Stack>
        <Line $tall><Select label="Number format" value="General" w={155} /></Line>
        <Line $tall>
          <Tool $size={18} aria-label="Currency">$</Tool>
          <Menu label="Currency options" />
          <Tool $w={28} $size={18} aria-label="Percent">%</Tool>
          <Tool aria-label="Comma style">
            <svg width="10" height="14" viewBox="0 0 10 14" fill={INK}><path d="M5 0a4 4 0 1 0 .8 7.900C5.500 10 4 11.500 1.500 12.800l.5 1C6.500 12.500 9 8.500 9 4.500A4 4 0 0 0 5 0z" /></svg>
          </Tool>
          <Rule $m={8} />
          <Tool aria-label="Increase decimal"><DecimalIcon more /></Tool>
          <Tool $w={28} aria-label="Decrease decimal"><DecimalIcon /></Tool>
        </Line>
      </Stack>
    </Group>
    <Group $w={177} $pad={13}>
      <Stack>
        <LabelTool><CondIcon />Conditional Formatting <Chevron /></LabelTool>
        <LabelTool><PaintedIcon />Format as Table <Chevron /></LabelTool>
        <LabelTool><PaintedIcon full />Cell Styles <Chevron /></LabelTool>
      </Stack>
    </Group>
    <Group $w={97} $pad={13}>
      <Stack>
        <LabelTool><InsertIcon />Insert <Chevron /></LabelTool>
        <LabelTool><DeleteIcon />Delete <Chevron /></LabelTool>
        <LabelTool><FormatIcon />Format <Chevron /></LabelTool>
      </Stack>
    </Group>
    <Group $w={155} $pad={9} $gap={5}>
      <Stack>
        <Line><Tool aria-label="AutoSum"><SumIcon /></Tool><Menu label="AutoSum options" /></Line>
        <Line><Tool aria-label="Fill"><FillDownIcon /></Tool><Menu label="Fill options" /></Line>
        <Line><Tool aria-label="Clear"><EraserIcon /></Tool><Menu label="Clear options" /></Line>
      </Stack>
      <Pair>
        <BigTool $menu><span><SortIcon /><Chevron /></span>Sort &amp;<br />Filter</BigTool>
        <BigTool $menu><span><FindIcon /><Chevron /></span>Find &amp;<br />Select</BigTool>
      </Pair>
    </Group>
    <Group $w={65} $pad={11}>
      <BigTool><span><AnalyzeIcon /></span>Analyze<br />Data</BigTool>
    </Group>
    <Group $pad={12} $last>
      <BigTool disabled><span><SensitivityIcon /><Chevron color="#b5b5b5" /></span>Sensitivity</BigTool>
    </Group>
  </Ribbon>
);

const FxLabel = styled.span`
  font-family: "Liberation Serif", serif;
  font-size: 18px;
  line-height: 20px;
  font-style: italic;
`;

const Spinner = styled.span`
  display: flex;
  flex-direction: column;
  gap: 5px;
`;

const DropEnd = styled.button`
  display: flex;
  align-items: center;
  padding: 0 4px;
  border: 0;
  background: none;
`;

const Formula = () => (
  <FormulaBar>
    <NameBox>
      <input aria-label="Name box" defaultValue="F6" />
      <Spinner><Triangle dir="up" size={7} /><Triangle dir="down" size={7} /></Spinner>
    </NameBox>
    <FormulaTools>
      <BarButton aria-label="Cancel"><CrossIcon /></BarButton>
      <BarButton aria-label="Enter"><TickIcon /></BarButton>
      <BarButton aria-label="Insert function"><FxLabel>fx</FxLabel></BarButton>
    </FormulaTools>
    <FormulaInput aria-label="Formula" />
    <DropEnd aria-label="Expand formula bar"><Triangle dir="down" size={7} /></DropEnd>
  </FormulaBar>
);

const DataCell = ({ value, column, row }) => {
  const selected = column === "F" && row === 6;
  if (!value) {
    return <Cell $selected={selected}>{selected && <Cursor />}</Cell>;
  }
  if (value.startsWith("$")) {
    return <Cell $number $pad={5}><Money><span>$</span><span>{value.slice(1)}</span></Money></Cell>;
  }
  const isNumber = /^\d/.test(value);
  return <Cell $number={isNumber} $pad={isNumber && column !== "E" ? 5 : 2}>{value}</Cell>;
};

const Grid = () => (
  <GridArea>
    <Sheet>
      <colgroup>
        <Col $w={23} />
        {columns.map((c) => <Col key={c} $w={columnWidths[c] || 53} />)}
      </colgroup>
      <thead>
        <tr>
          <Corner><Icon w={15} h={15} color="none"><path d="M15 0v15H0z" fill="#d6d6d6" /></Icon></Corner>
          {columns.map((c) => <ColHead key={c} $selected={c === "F"}>{c}</ColHead>)}
        </tr>
      </thead>
      <tbody>
        {Array.from({ length: ROW_COUNT }, (_, i) => i + 1).map((row) => (
          <tr key={row}>
            <RowHead $h={rowHeights[row] || 15} $selected={row === 6}>{row}</RowHead>
            {row === 1 && <TitleCell colSpan={6}>First Quarter Income</TitleCell>}
            {columns.slice(row === 1 ? 6 : 0).map((c) => (
              <DataCell key={c} column={c} row={row} value={cells[row]?.[columns.indexOf(c)]} />
            ))}
          </tr>
        ))}
      </tbody>
    </Sheet>
  </GridArea>
);

const SheetTabs = () => {
  const [active, setActive] = useState("Sheet3");
  return (
    <SheetBar>
      <Arrows>
        <BarButton aria-label="Previous sheet"><Triangle dir="left" color="#adadad" /></BarButton>
        <BarButton aria-label="Next sheet"><Triangle dir="right" color="#adadad" /></BarButton>
      </Arrows>
      {sheets.map((name) => (
        <SheetTab key={name} $active={name === active} onClick={() => setActive(name)}>{name}</SheetTab>
      ))}
      <SheetTab $narrow aria-label="Add sheet"><PlusIcon /></SheetTab>
    </SheetBar>
  );
};

const Status = () => (
  <StatusBar>
    <StatusSide>
      Ready
      <StatusItem aria-label="Record macro"><MacroIcon /></StatusItem>
      <StatusItem><AccessIcon />Accessibility: Investigate</StatusItem>
    </StatusSide>
    <StatusSide>
      <ViewButton $active aria-label="Normal view"><NormalViewIcon /></ViewButton>
      <ViewButton aria-label="Page layout view"><PageViewIcon /></ViewButton>
      <ViewButton aria-label="Page break view"><BreakViewIcon /></ViewButton>
      <ZoomButton aria-label="Zoom out"><PlusIcon minus size={8} /></ZoomButton>
      <ZoomSlider type="range" aria-label="Zoom" min="0" max="200" defaultValue="100" />
      <ZoomButton aria-label="Zoom in"><PlusIcon size={8} /></ZoomButton>
      <ZoomValue>100%</ZoomValue>
    </StatusSide>
  </StatusBar>
);

const App = () => (
  <Page>
    <GlobalStyle />
    <Header />
    <Tabs />
    <RibbonBar />
    <Formula />
    <Grid />
    <SheetTabs />
    <Status />
  </Page>
);

export default App;
